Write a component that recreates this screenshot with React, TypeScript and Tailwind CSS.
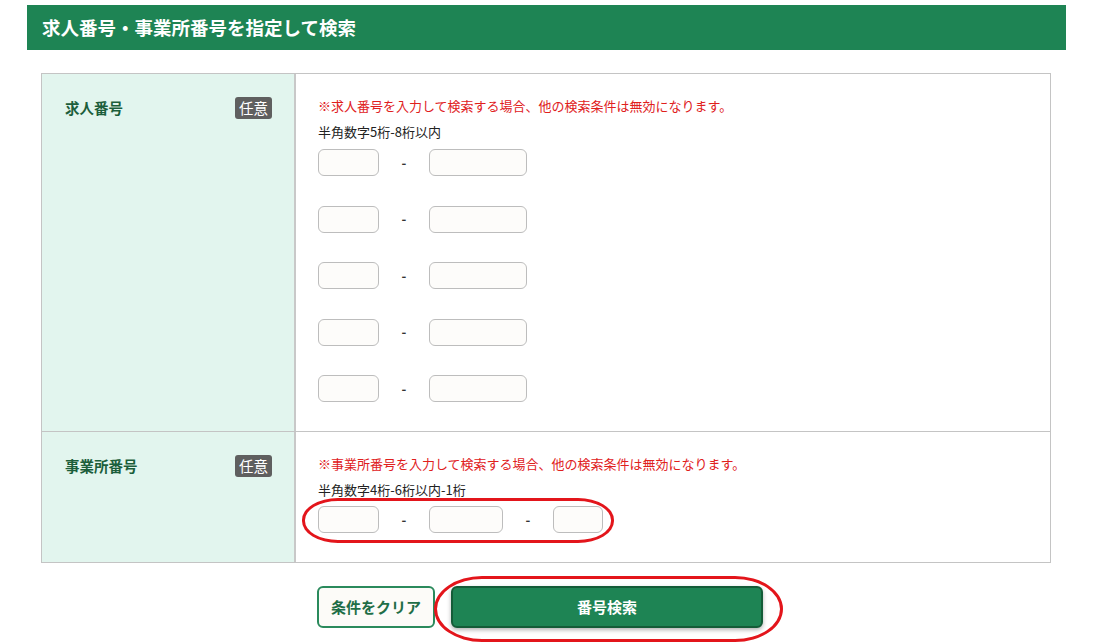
import type { ReactNode } from "react";

const FONT = { fontFamily: '"Noto Sans CJK JP", "Noto Sans", sans-serif' };

function Badge() {
  return (
    <span className="rounded-[3px] bg-[#5f5f5f] px-[4px] text-[14.5px] leading-[22px] text-white">
      任意
    </span>
  );
}

function Box({ w }: { w: string }) {
  return <div className={`h-[27px] rounded-[6px] border border-[#bdbdbd] bg-[#fdfcfa] ${w}`} />;
}

function Dash() {
  return <span className="w-[50px] text-center text-[13px] font-bold text-[#333]">-</span>;
}

function Row({ label, children }: { label: string; children: ReactNode }) {
  return (
    <div className="grid grid-cols-[254px_1fr] border-b border-[#c4c4c4] last:border-b-0">
      <div className="flex items-start justify-between border-r-2 border-[#c8c8c8] bg-[#e2f5ee] pl-[23px] pr-[22px] pt-[23px]">
        <span className="text-[14.5px] font-bold leading-[22px] text-[#1b5e3b]">{label}</span>
        <Badge />
      </div>
      <div className="bg-white pb-[29px] pl-[22px] pt-[24px]">{children}</div>
    </div>
  );
}

export default function App() {
  const jobRows = [0, 1, 2, 3, 4];
  return (
    <div className="relative h-[642px] w-[1100px] overflow-hidden bg-white pt-[5px]" style={FONT}>
      <div className="ml-[27px] flex h-[45px] w-[1039px] items-center bg-[#1e8454] pl-[15px]">
        <h1 className="text-[18.5px] font-bold text-white">求人番号・事業所番号を指定して検索</h1>
      </div>

      <div className="ml-[41px] mt-[23px] w-[1010px] border border-[#c4c4c4]">
        <Row label="求人番号">
          <p className="text-[13px] leading-[16px] text-[#e0201c]">
            ※求人番号を入力して検索する場合、他の検索条件は無効になります。
          </p>
          <p className="mt-[10px] text-[13px] leading-[16px] text-[#222]">半角数字5桁-8桁以内</p>
          <div className="mt-[9px] flex flex-col gap-[29.5px]">
            {jobRows.map((i) => (
              <div key={i} className="flex items-center">
                <Box w="w-[61px]" />
                <Dash />
                <Box w="w-[98px]" />
              </div>
            ))}
          </div>
        </Row>
        <Row label="事業所番号">
          <p className="text-[13px] leading-[16px] text-[#e0201c]">
            ※事業所番号を入力して検索する場合、他の検索条件は無効になります。
          </p>
          <p className="mt-[10px] text-[13px] leading-[16px] text-[#222]">半角数字4桁-6桁以内-1桁</p>
          <div className="mt-[8px] flex items-center">
            <Box w="w-[61px]" />
            <Dash />
            <Box w="w-[74px]" />
            <Dash />
            <Box w="w-[50px]" />
          </div>
        </Row>
      </div>

      <div className="ml-[317px] mt-[23px] flex gap-[16px]">
        <button className="h-[42px] w-[118px] rounded-[6px] border-2 border-[#2a8a5c] bg-[#fcfbf8] text-[15px] font-bold text-[#1f6e47]">
          条件をクリア
        </button>
        <button className="h-[42px] w-[312px] rounded-[6px] border-2 border-[#145c38] bg-[#1e8454] text-[15px] font-bold text-white shadow-[0_2px_4px_rgba(0,0,0,0.3)]">
          番号検索
        </button>
      </div>

      {/* red annotation rings */}
      <div className="pointer-events-none absolute left-[302px] top-[498px] h-[45px] w-[312px] rounded-[36px/22px] border-[3px] border-[#e3151b]" />
      <div className="pointer-events-none absolute left-[434px] top-[576px] h-[66px] w-[349px] rounded-[48px/33px] border-[3px] border-[#e3151b]" />
    </div>
  );
}
